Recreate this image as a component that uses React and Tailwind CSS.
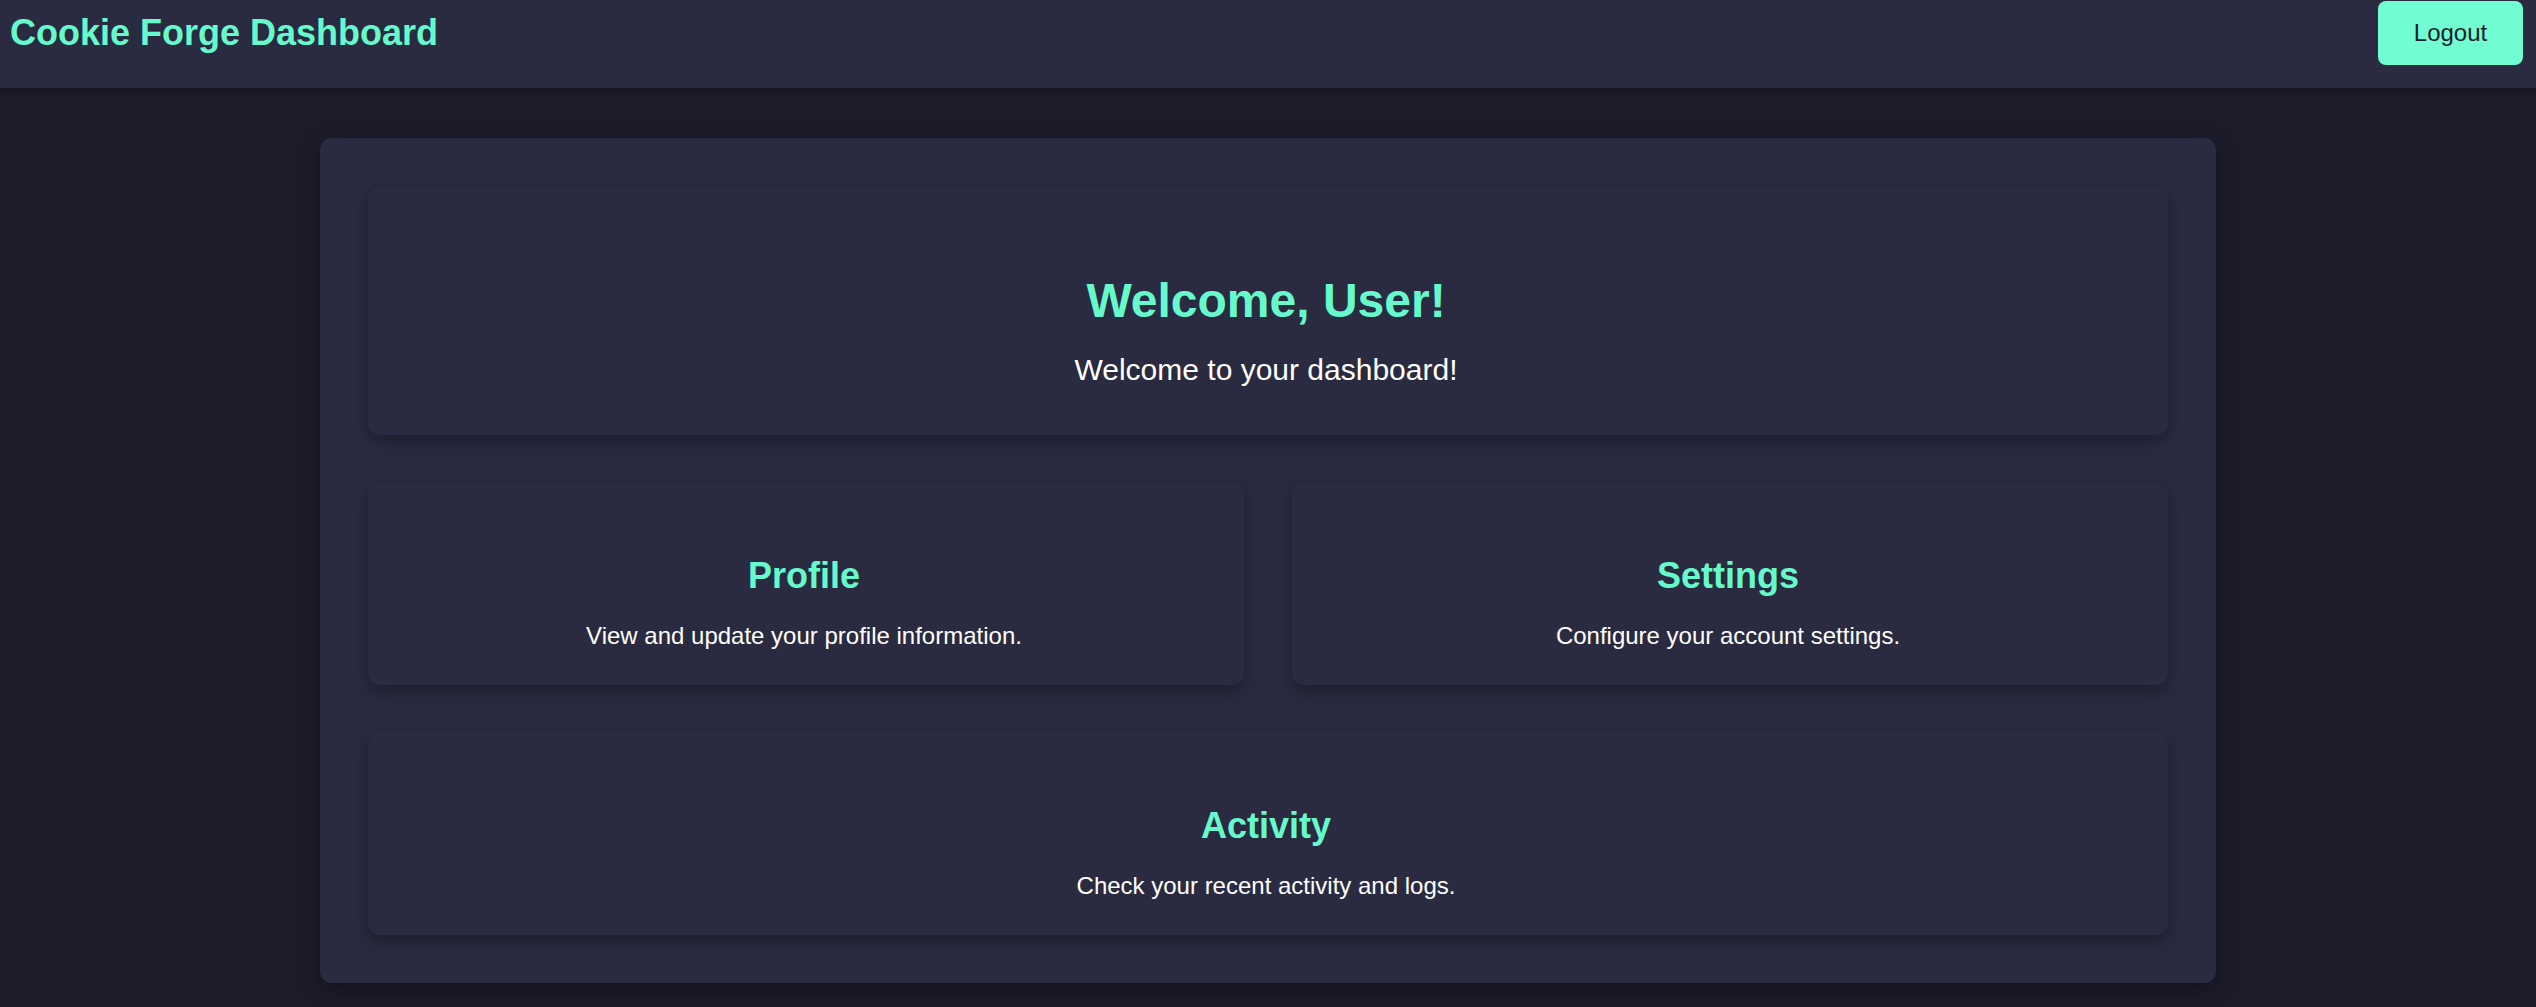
import React from 'react';

// =============================================================================
// Cookie Forge 대시보드
// =============================================================================
const cards = [
  { id: 'profile', title: 'Profile', text: 'View and update your profile information.' },
  { id: 'settings', title: 'Settings', text: 'Configure your account settings.' },
];

const Card = ({ title, text }) => (
  <div className="bg-[#2a2b40] rounded-[12px] shadow-[0_6px_18px_rgba(0,0,0,0.35)] pt-[72px] pb-[35px] pl-[34px] pr-[38px] text-center">
    <h2 className="text-[36px] leading-[41px] font-bold text-[#66f9cc]">{title}</h2>
    <p className="mt-[26px] text-[24px] leading-[28px] text-white">{text}</p>
  </div>
);

const Header = () => (
  <header className="h-[88px] bg-[#2a2b40] shadow-[0_3px_9px_rgba(0,0,0,0.3)] flex items-start justify-between pl-[10px] pr-[13px]">
    <h1 className="mt-[12px] text-[36px] leading-[41px] font-bold text-[#66f9cc]">Cookie Forge Dashboard</h1>
    <button className="mt-[1px] h-[64px] w-[145px] rounded-[8px] bg-[#72fcd1] text-[24px] leading-[28px] text-[#1c1c2b]">
      Logout
    </button>
  </header>
);

export default function App() {
  return (
    <div
      className="min-h-screen bg-[#1c1c2b]"
      style={{ fontFamily: '"Liberation Sans", Arial, sans-serif' }}
    >
      <Header />

      <main className="pt-[50px] pb-[24px]">
        <div className="mx-auto w-[1896px] bg-[#2a2b40] rounded-[12px] shadow-[0_6px_24px_rgba(0,0,0,0.35)] p-[48px] flex flex-col gap-[48px]">
          {/* 환영 카드 */}
          <div className="bg-[#2a2b40] rounded-[12px] shadow-[0_6px_18px_rgba(0,0,0,0.35)] pt-[87px] pb-[47px] pl-[46px] pr-[50px] text-center">
            <h1 className="text-[48px] leading-[55px] font-bold text-[#66f9cc]">Welcome, User!</h1>
            <p className="mt-[25px] text-[30px] leading-[34.5px] text-white">Welcome to your dashboard!</p>
          </div>

          <div className="grid grid-cols-2 gap-[48px]">
            {cards.map((c) => (
              <Card key={c.id} title={c.title} text={c.text} />
            ))}
          </div>

          <Card title="Activity" text="Check your recent activity and logs." />
        </div>
      </main>
    </div>
  );
}
